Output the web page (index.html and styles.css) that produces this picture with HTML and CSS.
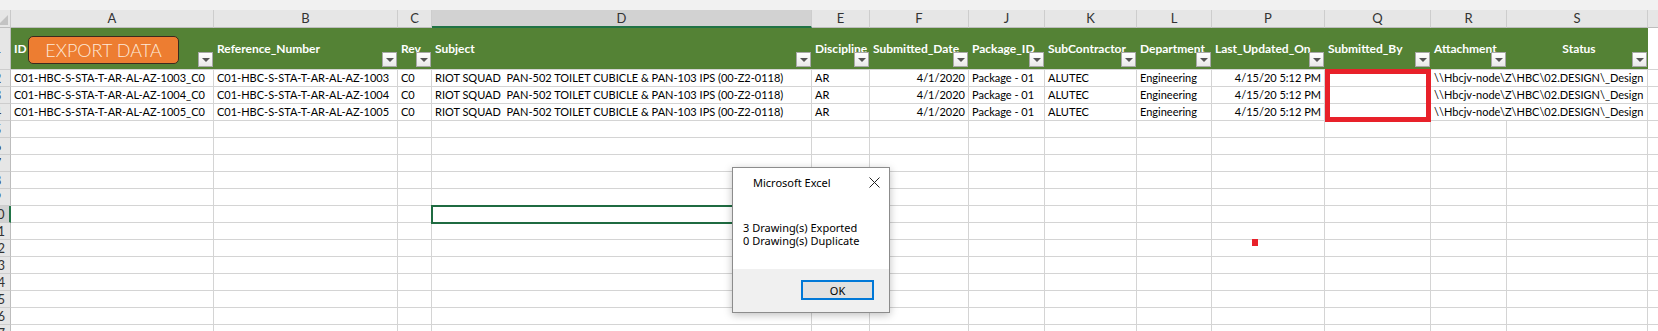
FILE: index.html
```html
<!DOCTYPE html>
<html>

<head>
	<title>Drawing Register</title>
	<link rel="stylesheet" href="styles.css">
</head>

<body>

	<div class="topbar"></div>

	<div class="sheet" id="sheet">
		<!-- column letters -->
		<div class="corner"><span class="tri"></span></div>
		<div class="colhead">A</div>
		<div class="colhead">B</div>
		<div class="colhead">C</div>
		<div class="colhead active">D</div>
		<div class="colhead">E</div>
		<div class="colhead">F</div>
		<div class="colhead">J</div>
		<div class="colhead">K</div>
		<div class="colhead">L</div>
		<div class="colhead">P</div>
		<div class="colhead">Q</div>
		<div class="colhead">R</div>
		<div class="colhead">S</div>
		<div class="colhead"></div>

		<!-- row 1 : table header -->
		<div class="rowhead tall">1</div>
		<div class="hcell">ID<span class="filter"></span></div>
		<div class="hcell">Reference_Number<span class="filter"></span></div>
		<div class="hcell">Rev<span class="filter"></span></div>
		<div class="hcell">Subject<span class="filter"></span></div>
		<div class="hcell">Discipline<span class="filter"></span></div>
		<div class="hcell">Submitted_Date<span class="filter"></span></div>
		<div class="hcell">Package_ID<span class="filter"></span></div>
		<div class="hcell">SubContractor<span class="filter"></span></div>
		<div class="hcell">Department<span class="filter"></span></div>
		<div class="hcell">Last_Updated_On<span class="filter"></span></div>
		<div class="hcell">Submitted_By<span class="filter"></span></div>
		<div class="hcell">Attachment<span class="filter"></span></div>
		<div class="hcell center">Status<span class="filter"></span></div>
		<div class="cell"></div>

		<!-- rows 2-4 : exported drawings -->
		<div class="rowhead">2</div>
		<div class="cell">C01-HBC-S-STA-T-AR-AL-AZ-1003_C0</div>
		<div class="cell">C01-HBC-S-STA-T-AR-AL-AZ-1003</div>
		<div class="cell">C0</div>
		<div class="cell">RIOT SQUAD&nbsp; PAN-502 TOILET CUBICLE &amp; PAN-103 IPS (00-Z2-0118)</div>
		<div class="cell">AR</div>
		<div class="cell num">4/1/2020</div>
		<div class="cell">Package - 01</div>
		<div class="cell">ALUTEC</div>
		<div class="cell">Engineering</div>
		<div class="cell num">4/15/20 5:12 PM</div>
		<div class="cell"></div>
		<div class="cell spill">\\Hbcjv-node\Z\HBC\02.DESIGN\_Design</div>
		<div class="cell"></div>

		<div class="rowhead">3</div>
		<div class="cell">C01-HBC-S-STA-T-AR-AL-AZ-1004_C0</div>
		<div class="cell">C01-HBC-S-STA-T-AR-AL-AZ-1004</div>
		<div class="cell">C0</div>
		<div class="cell">RIOT SQUAD&nbsp; PAN-502 TOILET CUBICLE &amp; PAN-103 IPS (00-Z2-0118)</div>
		<div class="cell">AR</div>
		<div class="cell num">4/1/2020</div>
		<div class="cell">Package - 01</div>
		<div class="cell">ALUTEC</div>
		<div class="cell">Engineering</div>
		<div class="cell num">4/15/20 5:12 PM</div>
		<div class="cell"></div>
		<div class="cell spill">\\Hbcjv-node\Z\HBC\02.DESIGN\_Design</div>
		<div class="cell"></div>

		<div class="rowhead">4</div>
		<div class="cell">C01-HBC-S-STA-T-AR-AL-AZ-1005_C0</div>
		<div class="cell">C01-HBC-S-STA-T-AR-AL-AZ-1005</div>
		<div class="cell">C0</div>
		<div class="cell">RIOT SQUAD&nbsp; PAN-502 TOILET CUBICLE &amp; PAN-103 IPS (00-Z2-0118)</div>
		<div class="cell">AR</div>
		<div class="cell num">4/1/2020</div>
		<div class="cell">Package - 01</div>
		<div class="cell">ALUTEC</div>
		<div class="cell">Engineering</div>
		<div class="cell num">4/15/20 5:12 PM</div>
		<div class="cell"></div>
		<div class="cell spill">\\Hbcjv-node\Z\HBC\02.DESIGN\_Design</div>
		<div class="cell"></div>
	</div>

	<!-- shapes floating over the sheet -->
	<button class="export">EXPORT DATA</button>
	<div class="redbox"></div>
	<div class="reddot"></div>

	<div class="msgbox">
		<div class="msgtitle">
			<span>Microsoft Excel</span>
			<svg class="close" width="11" height="11" viewBox="0 0 11 11">
				<path d="M0.5 0.5 L10.5 10.5 M10.5 0.5 L0.5 10.5" stroke="#222" stroke-width="1" fill="none" />
			</svg>
		</div>
		<div class="msgtext">
			3 Drawing(s) Exported<br>
			0 Drawing(s) Duplicate
		</div>
		<div class="msgfoot">
			<button class="okbtn">OK</button>
		</div>
	</div>

	<script>
		// empty rows 5 - 17
		var sheet = document.getElementById("sheet");
		for (var r = 5; r <= 17; r++) {
			var rh = document.createElement("div");
			rh.className = r == 10 ? "rowhead rowsel" : "rowhead";
			rh.textContent = r;
			sheet.appendChild(rh);
			for (var c = 0; c < 14; c++) {
				var cell = document.createElement("div");
				cell.className = (r == 10 && c == 3) ? "cell sel" : "cell";
				sheet.appendChild(cell);
			}
		}
	</script>

</body>

</html>
```

FILE: styles.css
```css
body {
	margin: 0;
	overflow: hidden;
	background: #fff;
	font-family: Lato, "Liberation Sans", sans-serif;
}

.topbar {
	height: 10px;
	background: #f1f1f1;
}

.sheet {
	display: grid;
	grid-template-columns: 26px 203px 184px 34px 380px 58px 99px 76px 92px 75px 113px 106px 76px 141px 40px;
	grid-template-rows: 18px 42px;
	grid-auto-rows: 17px;
	margin-left: -15px;
}

.sheet > div {
	box-sizing: border-box;
}

.corner {
	background: #e6e6e6;
	border-right: 1px solid #c9c9c9;
	border-bottom: 1px solid #bdbdbd;
	position: relative;
}

.corner .tri {
	position: absolute;
	right: 2px;
	bottom: 2px;
	width: 0;
	height: 0;
	border-left: 10px solid transparent;
	border-bottom: 10px solid #c3c3c3;
}

.colhead {
	background: #e6e6e6;
	border-right: 1px solid #cdcdcd;
	border-bottom: 1px solid #bdbdbd;
	color: #333;
	font-size: 13px;
	text-align: center;
	line-height: 17px;
}

.colhead.active {
	background: #d2d2d2;
	border-bottom: 2px solid #217346;
}

.rowhead {
	background: #e6e6e6;
	border-right: 1px solid #bdbdbd;
	border-bottom: 1px solid #cdcdcd;
	color: #333;
	font-size: 13px;
	text-align: center;
	line-height: 16px;
	overflow: hidden;
}

.rowhead.tall {
	line-height: 41px;
}

.rowhead.rowsel {
	background: #d2d2d2;
	border-right: 2px solid #217346;
}

.hcell {
	position: relative;
	background: #548235;
	color: #fff;
	font-weight: bold;
	font-size: 12px;
	padding-left: 3px;
	display: flex;
	align-items: center;
	white-space: nowrap;
	overflow: hidden;
	border-bottom: 1px solid #d4d4d4;
}

.hcell.center {
	justify-content: center;
}

.filter {
	position: absolute;
	right: 1px;
	bottom: 2px;
	width: 15px;
	height: 15px;
	box-sizing: border-box;
	background: linear-gradient(#ffffff, #e9e9e9);
	border: 1px solid #a8a8a8;
}

.filter:after {
	content: "";
	position: absolute;
	left: 3px;
	top: 5px;
	border-left: 4px solid transparent;
	border-right: 4px solid transparent;
	border-top: 4px solid #555;
}

.cell {
	border-right: 1px solid #d4d4d4;
	border-bottom: 1px solid #d4d4d4;
	font-size: 11px;
	color: #000;
	padding: 0 3px;
	line-height: 16px;
	white-space: nowrap;
	overflow: hidden;
}

.cell.num {
	text-align: right;
}

.cell.spill {
	grid-column: span 2;
	overflow: visible;
}

.cell.sel {
	outline: 2px solid #1f6b41;
	outline-offset: -1px;
	position: relative;
}

.export {
	position: absolute;
	left: 28px;
	top: 36px;
	width: 151px;
	height: 28px;
	background: #ed7d31;
	border: 1px solid #3b2a1e;
	border-radius: 5px;
	color: #fde9d9;
	font-family: Lato, "Liberation Sans", sans-serif;
	font-weight: 300;
	font-size: 18px;
	padding: 0;
}

.redbox {
	position: absolute;
	left: 1325px;
	top: 69px;
	width: 106px;
	height: 53px;
	box-sizing: border-box;
	border: 5px solid #e8212a;
}

.reddot {
	position: absolute;
	left: 1252px;
	top: 239px;
	width: 6px;
	height: 7px;
	background: #e8212a;
}

.msgbox {
	position: absolute;
	left: 732px;
	top: 167px;
	width: 158px;
	height: 146px;
	box-sizing: border-box;
	background: #fff;
	border: 1px solid #8c8c8c;
	box-shadow: 0 2px 8px rgba(0, 0, 0, 0.25);
	font-family: "Noto Sans", "Open Sans", sans-serif;
	font-size: 11px;
	color: #000;
	display: flex;
	flex-direction: column;
}

.msgtitle {
	display: flex;
	justify-content: space-between;
	align-items: center;
	padding: 6px 9px 0 20px;
	height: 16px;
}

.msgtext {
	flex: 1;
	padding: 31px 0 0 10px;
	line-height: 13px;
}

.msgfoot {
	background: #f0f0f0;
	height: 43px;
	display: flex;
	justify-content: flex-end;
	padding: 11px 15px 0 0;
	box-sizing: border-box;
}

.okbtn {
	width: 73px;
	height: 20px;
	background: #e1e1e1;
	border: 2px solid #0078d7;
	font-family: "Noto Sans", "Open Sans", sans-serif;
	font-size: 11px;
	padding: 0;
}
```
